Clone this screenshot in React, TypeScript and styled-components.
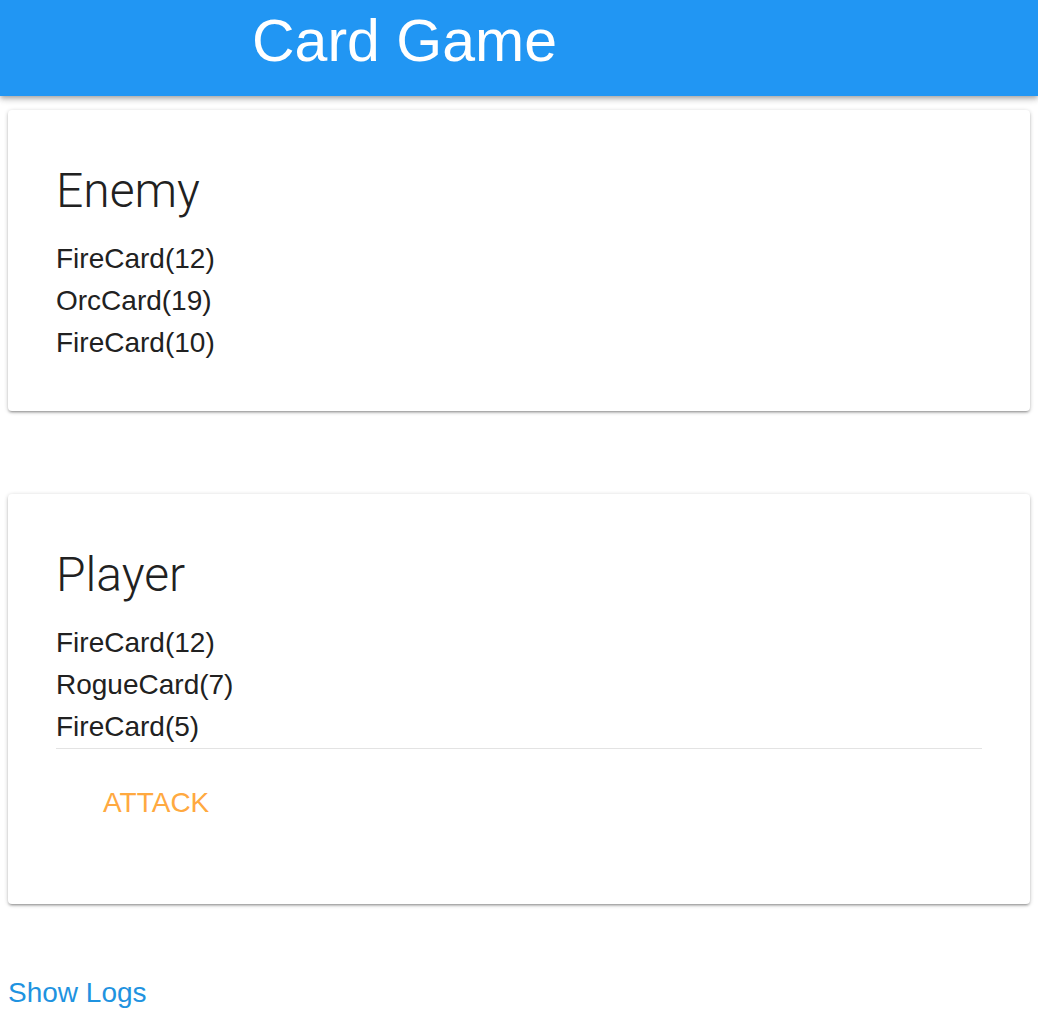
import styled, { createGlobalStyle } from "styled-components";

const GlobalStyle = createGlobalStyle`
  html, body {
    margin: 0;
    padding: 0;
    background: #ffffff;
    font-family: "Liberation Sans", Arial, sans-serif;
    color: #212121;
  }
`;

const Page = styled.div`
  display: flex;
  flex-direction: column;
`;

const AppBar = styled.header`
  height: 96px;
  box-sizing: border-box;
  padding: 6px 0 0 252px;
  background: #2196f3;
  box-shadow: 0 2px 4px -1px rgba(0, 0, 0, 0.2), 0 4px 5px 0 rgba(0, 0, 0, 0.14),
    0 1px 10px 0 rgba(0, 0, 0, 0.12);
  position: relative;
  z-index: 1;
`;

const Title = styled.h1`
  margin: 0;
  font-size: 59px;
  line-height: 70px;
  font-weight: 400;
  color: #ffffff;
`;

const Main = styled.main`
  display: flex;
  flex-direction: column;
  padding: 14px 8px 0;
`;

const Card = styled.section<{ $bottom: number; $gapAfter: number }>`
  background: #ffffff;
  border-radius: 4px;
  padding: 53px 48px ${(p) => p.$bottom}px;
  margin-bottom: ${(p) => p.$gapAfter}px;
  box-shadow: 0 1px 4px 0 rgba(0, 0, 0, 0.22), 0 2px 2px 0 rgba(0, 0, 0, 0.14),
    0 3px 1px -2px rgba(0, 0, 0, 0.12);
`;

const Heading = styled.h2`
  margin: 0 0 19px;
  font-family: Roboto, "Helvetica Neue", "Liberation Sans", sans-serif;
  font-weight: 300;
  font-size: 48px;
  line-height: 56px;
  color: #212121;
`;

const CardList = styled.ul`
  list-style: none;
  margin: 0;
  padding: 0;
`;

const CardItem = styled.li`
  font-size: 28px;
  line-height: 42px;
  color: #212121;
`;

const Divider = styled.hr`
  margin: 0;
  border: none;
  height: 1px;
  background: #e3e3e3;
`;

const Actions = styled.div`
  display: flex;
  padding-top: 23px;
`;

const FlatButton = styled.button`
  border: none;
  background: transparent;
  padding: 13px 47px;
  font-family: "Liberation Sans", Arial, sans-serif;
  font-size: 28px;
  line-height: 36px;
  color: #ffa940;
  text-transform: uppercase;
  cursor: pointer;
`;

const LogsLink = styled.a`
  font-size: 28px;
  line-height: 32px;
  color: #1f93e0;
  text-decoration: none;
  cursor: pointer;
  align-self: flex-start;
`;

const enemyCards = ["FireCard(12)", "OrcCard(19)", "FireCard(10)"];
const playerCards = ["FireCard(12)", "RogueCard(7)", "FireCard(5)"];

const App = () => {
  return (
    <Page>
      <GlobalStyle />
      <AppBar>
        <Title>Card Game</Title>
      </AppBar>
      <Main>
        <Card $bottom={47} $gapAfter={83}>
          <Heading>Enemy</Heading>
          <CardList>
            {enemyCards.map((c, i) => (
              <CardItem key={i}>{c}</CardItem>
            ))}
          </CardList>
        </Card>

        <Card $bottom={70} $gapAfter={73}>
          <Heading>Player</Heading>
          <CardList>
            {playerCards.map((c, i) => (
              <CardItem key={i}>{c}</CardItem>
            ))}
          </CardList>
          <Divider />
          <Actions>
            <FlatButton>Attack</FlatButton>
          </Actions>
        </Card>

        <LogsLink>Show Logs</LogsLink>
      </Main>
    </Page>
  );
};

export default App;
